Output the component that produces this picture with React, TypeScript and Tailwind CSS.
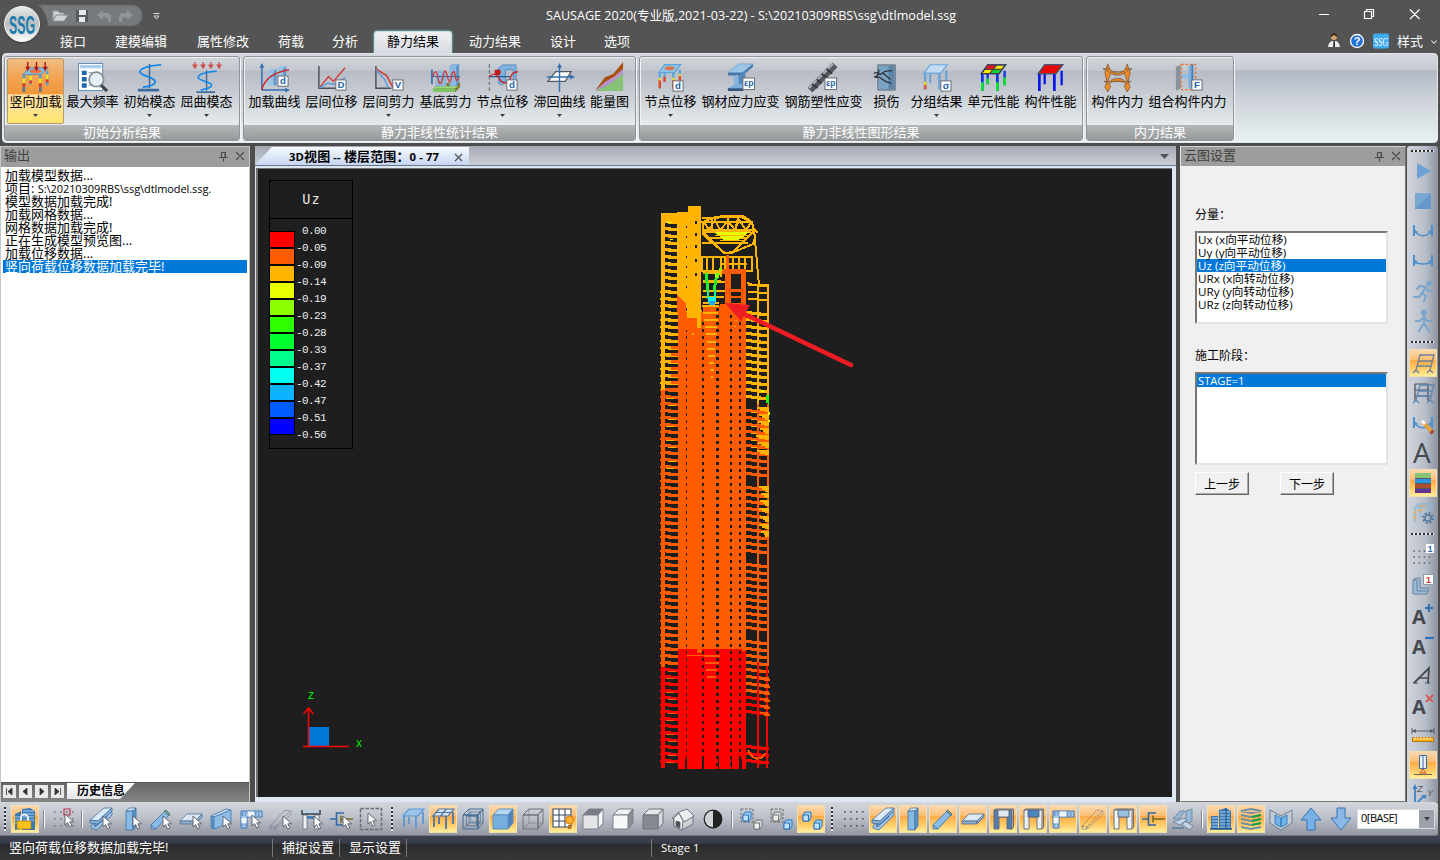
import React from 'react';

const UI = "font-['Open_Sans','Noto_Sans_CJK_SC',sans-serif]";
const CJK = "font-['Noto_Sans_CJK_SC',sans-serif]";

/* ---------- small building blocks for the icons ---------- */

const Cursor = ({ x = 12, y = 9 }: { x?: number; y?: number }) => (
  <path transform={`translate(${x} ${y})`} d="M0 0v11l2.6-2.4 2 4.4 2.2-1-2-4.2h3.8z" fill="#fff" stroke="#555b66" strokeWidth=".9" />
);

const Tag = ({ t, x = 19, y = 17 }: { t: string; x?: number; y?: number }) => (
  <g>
    <rect x={x + 0.5} y={y + 0.5} width={t.length > 1 ? 12 : 10.5} height={t.length > 1 ? 12 : 10.5} fill="#fff" stroke="#666b73" />
    <text x={x + (t.length > 1 ? 6.5 : 5.8)} y={y + 9.2} textAnchor="middle" fontSize={t.length > 1 ? 9 : 10} fontWeight="700" fill="#2563a8" fontFamily="Liberation Sans">{t}</text>
  </g>
);

const TableFrame = ({ top, leg, tipA, tipB }: { top: string; leg: string; tipA?: string; tipB?: string }) => (
  <g>
    <path d="M10 12v11M27.500 9v15" stroke={leg} strokeWidth="2.4" />
    <path d="M4.500 12v18M20 12v18" stroke={leg} strokeWidth="2.8" />
    {tipA && <path d="M4.500 18v7M20 18v7M27.500 14v5" stroke={tipA} strokeWidth="2.8" />}
    {tipB && <path d="M4.500 21v9M20 21v9M10 17v6M27.500 16v8" stroke={tipB} strokeWidth="2.8" />}
    <path d="M3.500 12 10 3h18.500l-7 9z" fill={top} stroke={leg} strokeWidth="1.3" />
  </g>
);

const Spring = ({ y = 0 }: { y?: number }) => (
  <g fill="none">
    <path d={`M16 ${2 + y}V27`} stroke="#46688f" strokeWidth="1.6" />
    <path d={`M28 ${3 + y}C13 ${4 + y} 7 ${7 + y} 6 ${10 + y} 6 ${14 + y} 20 ${15 + y} 22 20 22 23 17 25 9 26`} stroke="#0f86e8" strokeWidth="1.8" />
    <path d="M4 29h22" stroke="#3e6b9e" strokeWidth="3" />
  </g>
);

const ribbonIcons: Record<string, React.ReactNode> = {
  load: (
    <g>
      <path d="M4 13v17M21 13v17M11 11v12M28 9v15" stroke="#5aa0c8" strokeWidth="2.800" />
      <path d="M4 17v5M21 17v5M11 14v5M28 13v5" stroke="#f6e21b" strokeWidth="2.800" />
      <path d="M4 22v4M21 22v4M11 19v3M28 18v3" stroke="#e03a22" strokeWidth="2.800" />
      <path d="M4 26v5M21 26v5" stroke="#6b7683" strokeWidth="2.800" />
      <path d="M3 13 9 6h20l-7 7z" fill="#7cbfdf" stroke="#6f8aa0" />
      <ellipse cx="16" cy="9.500" rx="6" ry="2.4" fill="#e8734b" />
      <path d="M8 0v6M17 0v6M26 0v6" stroke="#a50f14" strokeWidth="1.4" />
      <path d="M5.500 5h5L8 9.500zM14.500 5h5L17 9.500zM23.500 5h5L26 9.500z" fill="#b01016" />
    </g>
  ),
  freq: (
    <g>
      <rect x="1.5" y="1.5" width="25" height="28" fill="#fff" stroke="#5d89b5" />
      <rect x="3" y="3" width="22" height="3.500" fill="#a9cdec" />
      <path d="M5 9h5v4.500H5zM5 15.500h5V20H5zM5 22h5v4.500H5z" fill="#1b66a8" />
      <path d="M12 11h4M12 24h5M24 25v2" stroke="#6b9ccb" />
      <circle cx="20" cy="18" r="7.500" fill="#e3eff4" stroke="#8c8f93" strokeWidth="1.8" />
      <path d="m25 24 6 6" stroke="#3f4246" strokeWidth="3.2" />
    </g>
  ),
  mode: <Spring />,
  buckle: (
    <g>
      <g transform="translate(2 6) scale(.88)"><Spring y={1} /></g>
      <path d="M4 0v4M12.500 0v4M20.500 0v4M29 0v4" stroke="#c9544e" strokeWidth="1.4" />
      <path d="M1 2.500h6L4 7.500zM9.500 2.500h6l-3 5zM17.500 2.500h6l-3 5zM26 2.500h6l-3 5z" fill="#d0504a" />
    </g>
  ),
  curve: (
    <g fill="none">
      <path d="m9 10 3-3h6v17H9zM19 7l3-3h6v18h-9z" fill="#9cc3e6" />
      <path d="M15 10l3-3v17h-3zM25 7l3-3v18h-3z" fill="#6096c8" />
      <path d="M3 29V4M3 29h25" stroke="#3470b3" strokeWidth="1.6" />
      <path d="m.5 6 2.500-5 2.500 5zM27 26.500v5l5-2.500z" fill="#3470b3" />
      <path d="M3 29C5 18 14 11 31 8" stroke="#c92a2a" strokeWidth="1.5" />
      <Tag t="d" x={19} y={14} />
    </g>
  ),
  driftD: (
    <g fill="none">
      <path d="M3 4v23h21" stroke="#4b4f57" strokeWidth="1.5" />
      <path d="m3 27 10-12 5 5L30 6" stroke="#cc3c33" strokeWidth="1.4" />
      <path d="m3 27 9-5 7 1 11-7" stroke="#5d9bd6" strokeWidth="1.5" />
      <Tag t="D" x={20} y={18} />
    </g>
  ),
  shearV: (
    <g fill="none">
      <path d="M3 4v23h16" stroke="#4b4f57" strokeWidth="1.5" />
      <path d="m3 7 11 7 7 13" stroke="#cc3c33" strokeWidth="1.6" />
      <path d="m3 8 9 10 4 9" stroke="#5d9bd6" strokeWidth="1.5" />
      <Tag t="V" x={20} y={18} />
    </g>
  ),
  base: (
    <g fill="none">
      <path d="m4 27 5-5 22-1v5l-5 5z" fill="#7a7a2f" />
      <path d="m3 27 4-2h23l-4 2z" fill="#9ad878" />
      <path d="M3 27h23v4H3z" fill="#7fc463" />
      <path d="m6 11 3-2h8v16H6zM20 4l3-2h7v20l-3 3h-7z" fill="#8cb8df" />
      <path d="M27 4l3-2v20l-3 3z" fill="#5d93c6" />
      <path d="M2 8v15" stroke="#2b66a8" strokeWidth="1.6" />
      <path d="M2 15h29" stroke="#2b66a8" />
      <path d="M3 15c2-7 4-6 5 0s3 12 5 2 3-10 5-2 3 7 4 1 3-9 4-2 2 6 4 2" stroke="#d23a32" strokeWidth="1.4" />
    </g>
  ),
  nodeCurve: (
    <g fill="none">
      <path d="M2.500 2v28" stroke="#777" strokeWidth="1.300" strokeDasharray="4 2" />
      <path d="m11 7 5-4h14v15l-3 3V8h-8v13l-4 3-3-2V10z" fill="#7fb2e0" stroke="#4a80b5" strokeWidth=".8" />
      <path d="M2 15h22" stroke="#2b5c90" strokeWidth="1.3" />
      <path d="M2 15c7-5 8-2 11 3s9 5 11-1 3-6 8-7" stroke="#c6252b" strokeWidth="1.4" />
      <path d="M8 8h6v5l-6 1z" fill="#c01c1c" />
      <Tag t="d" x={20} y={18} />
    </g>
  ),
  hyst: (
    <g fill="none">
      <path d="m4 20 8-10h16l-6 10z" fill="#fff" stroke="#55585e" strokeWidth="1.3" />
      <path d="M16 31V5M3 15.500h25" stroke="#3470b3" strokeWidth="1.5" />
      <path d="m13.500 6 2.500-5 2.500 5zM27 13v5l5-2.500z" fill="#3470b3" />
    </g>
  ),
  energy: (
    <g>
      <path d="M2 30 14 19l7-5 9-7v23z" fill="#85c477" />
      <path d="m2 30 11-12 8-4 9-8v6l-10 8-8 5z" fill="#b694d0" />
      <path d="m1 30 10-14 9-4L30 0v7l-9 8-9 5z" fill="#a8500e" />
    </g>
  ),
  nodeD: (
    <g>
      <g transform="scale(.9) translate(1 0)"><TableFrame top="#8fc4e6" leg="#5aa5d9" tipA="#f0df2c" tipB="#e04a2c" /></g>
      <ellipse cx="15" cy="6.500" rx="5" ry="2" fill="#dd744d" />
      <Tag t="d" x={18} y={19} />
    </g>
  ),
  steel: (
    <g>
      <path d="m3 11 11-9h15l-11 9z" fill="#9dc5ea" stroke="#5a8fc2" strokeWidth=".6" />
      <path d="M3 11h15l11-9v3l-11 9H3z" fill="#4677a8" />
      <path d="M9 14h5v12H9z" fill="#86b5df" /><path d="m14 14 7-5v13l-7 5z" fill="#5387bb" />
      <path d="m3 27 7-4h13l-5 4z" fill="#7eaedb" /><path d="M3 27h16v3H3z" fill="#30547f" />
      <Tag t="εp" x={18} y={16} />
    </g>
  ),
  rebar: (
    <g>
      <path d="M2 29 28 3" stroke="#55595f" strokeWidth="7" />
      <path d="M1 27 26 2" stroke="#b0b4b9" strokeWidth="2" />
      <path d="m4 23 6 4M9 18l5 4M14 12l6 5M19 7l6 5" stroke="#303338" strokeWidth="1.700" />
      <Tag t="εp" x={17} y={16} />
    </g>
  ),
  damage: (
    <g fill="none">
      <rect x="7" y="3" width="18" height="26" fill="#7aa3c3" stroke="#6a6f76" />
      <rect x="18" y="4" width="6" height="24" fill="#5d87aa" />
      <path d="M3 12c4-4 5 3 8 0s6-3 11-3M3 15l6 1 6 4 6 2M12 11l8 7M8 8v4l-4 4" stroke="#2e3238" strokeWidth="1.300" />
    </g>
  ),
  group: (
    <g>
      <g transform="scale(.95)"><TableFrame top="#c2dbf2" leg="#6ba5da" /></g>
      <path d="M4.300 20v4" stroke="#e3cf2a" strokeWidth="2.700" />
      <path d="M4.300 24v4" stroke="#e0502c" strokeWidth="2.700" />
      <Tag t="σ" x={20} y={19} />
    </g>
  ),
  element: (
    <g>
      <TableFrame top="#ffe800" leg="#1433e0" tipB="#10e033" />
      <path d="M10 3h9l-3.500 4.500H6.800z" fill="#e8101a" />
      <path d="M15.500 7.500H25L21.500 12H12z" fill="#12d834" />
      <path d="M3.500 12 10 3h18.500l-7 9zM7 7.500h18M19.500 3 12 12" fill="none" stroke="#444" strokeWidth="1.3" />
    </g>
  ),
  member: (
    <g>
      <TableFrame top="#e60000" leg="#0b17e6" />
      <path d="M3.500 12 10 3h18.500l-7 9z" fill="#e80808" stroke="#555" strokeWidth="1.3" />
    </g>
  ),
  force: (
    <g fill="#f08a24" stroke="#7c5b3c" strokeWidth=".8">
      <path d="m6 2 3 9-3 9 3 5-3 6-3-5 2-6-2-9zM26 2l-3 9 3 9-3 5 3 6 3-5-2-6 2-9z" />
      <path d="M1 7h7c4 6 12 6 16 0h7l-5 2c-5 6-15 6-20 0zM2 20h6c4-4 12-4 16 0h6l-5 2c-5-3-13-3-18 0z" />
      <path d="M9 10h14M9 20h14" fill="none" />
    </g>
  ),
  combo: (
    <g>
      <path d="m4 5 5-2v24l-5 3z" fill="#8a929c" />
      <path d="M9 13h9v4H9z" fill="#8fbbe6" />
      <path d="m17 4 5-2v23l-5 3z" fill="#7fb0df" /><path d="m20 3 2-1v23l-2 1z" fill="#4c80b4" />
      <path d="M9.500 2.500h15v26h-15z" fill="none" stroke="#f26a1b" strokeWidth="1.2" strokeDasharray="2.500 2" />
      <Tag t="F" x={20} y={18} />
    </g>
  ),
};

const Cube = ({ front = 'none', top = 'none', side = 'none', line = '#5f646c' }: { front?: string; top?: string; side?: string; line?: string }) => (
  <g stroke={line} strokeWidth="1" strokeLinejoin="round">
    {front === 'none' && <path d="M8 2v14h14M8 16l-6 6" fill="none" strokeWidth=".6" />}
    <path d="m2 8 6-6h14l-5 6z" fill={top} />
    <path d="m17 8 5-6v14l-5 6z" fill={side} />
    <path d="M2 8h15v14H2z" fill={front} />
  </g>
);

const IBeam = () => (
  <g stroke="#476f9b" strokeWidth=".8" strokeLinejoin="round">
    <path d="m2 19 16-16 5 2v3L8 23l-6-2z" fill="#9cc2e6" />
    <path d="m4 14 12-9 2 5L6 20z" fill="#5b8fc4" />
    <path d="M1 13 15 1h8L9 14z" fill="#dceaf8" />
    <path d="m1 13 8 1L23 1v3L9 17l-8-1z" fill="#86b4df" />
  </g>
);
const Column = () => (
  <g stroke="#3f729f" strokeWidth=".8">
    <path d="m7 4 3-3h7l-3 3z" fill="#d6e8f8" />
    <path d="M7 4h7v19H7z" fill="#86b9e4" />
    <path d="m14 4 3-3v18l-3 4z" fill="#5b94c8" />
  </g>
);
const Brace = () => (
  <g stroke="#3f6f9e" strokeWidth=".8">
    <path d="m2 18 14-14 4 4L7 22H2z" fill="#8ab9e6" />
    <path d="m15 4 2-1 4 4-1 2z" fill="#7c9c6a" />
    <path d="m2 18 5 4" />
  </g>
);
const Slab = () => (
  <g stroke="#56718e" strokeWidth=".8">
    <path d="m1 14 7-7h15l-7 7z" fill="#dbe8f5" />
    <path d="M1 14h15v3H1zM16 14l7-7v3l-7 7z" fill="#88abcf" />
  </g>
);
const Wall = () => (
  <g stroke="#4a7eb0" strokeWidth=".9" strokeLinejoin="round">
    <path d="m2 9 15-7 5 1-17 7z" fill="#c5def4" />
    <path d="m2 9 3 1v12l-3-1z" fill="#5d95ca" />
    <path d="M5 10 22 3v12L5 22z" fill="#8dbce6" />
  </g>
);
const Corner = () => (
  <g>
    <path d="M2 4h21v6H8v11H2z" fill="#a9c9e8" stroke="#3d76b0" strokeWidth="1" />
    <path d="M9 4.500h6v5H9z" fill="#f2f5f8" />
    <path d="M2.500 11h5v5h-5z" fill="#f2f5f8" />
    <path d="M3 6h5M16 6h6M16 8h6M3 18h4M3 8h4" stroke="#2d6fb2" strokeDasharray="1.500 1.500" />
  </g>
);
const Dashed = () => (
  <path d="M1 19 16 3l5 1L6 20zM6 20v2L22 7V4M1 19v3h5" fill="none" stroke="#747a83" strokeWidth=".9" strokeDasharray="2 1.200" />
);
const Portal = ({ beam = '#dbe6f0', legs = '#6f9fce', edge = '#596879' }: { beam?: string; legs?: string; edge?: string }) => (
  <g stroke={edge} strokeWidth=".9">
    <path d="M3 3h18v19h-5V10H8v12H3z" fill={legs} />
    <path d="M7 3h11v7H7z" fill={beam} />
    <path d="M21 3l1.500-1v18L21 22M3 3l2-1h17" fill="none" />
  </g>
);
const Damper = () => (
  <g fill="none" stroke="#2f69a5" strokeWidth="1.600">
    <path d="M1 12h6M15 6H7.500v12H15" />
    <path d="M12 12h12M12 8.500v7" stroke="#776b23" />
  </g>
);
const Dots = ({ tint = '#50555e' }: { tint?: string }) => (
  <g fill={tint}>
    {[3, 9, 15, 21].map((x) => [4, 11, 18].map((y) => <rect key={`${x}-${y}`} x={x} y={y} width="1.600" height="1.600" />))}
  </g>
);
const Table = ({ leg = '#5898d4', top = '#9cc3e8', grid = false }: { leg?: string; top?: string; grid?: boolean }) => (
  <g stroke={leg} strokeWidth="1.200">
    <path d="M3 9v11M15 9v13M8 10v7M22 5v12" fill="none" strokeWidth="1.800" />
    <path d="m2 9 6-7h15l-6 7z" fill={top} />
    {grid && <path d="M5 5.500h15M15.500 2 9.500 9" fill="none" />}
  </g>
);
const Bowl = ({ deep = true }: { deep?: boolean }) => (
  <g fill="none" stroke="#4f8fca" strokeWidth="1.500">
    <path d="M3 6v11M21 6v11" strokeWidth="2" />
    <path d={deep ? 'M3 10c4 9 14 9 18 0' : 'M3 12c3 4 15 4 18 0'} />
    <path d="M3 10l4 3-4 2M21 10l-4 3 4 2" fill="#4f8fca" stroke="none" />
  </g>
);
const Leaning = ({ c = '#6c8199' }: { c?: string }) => (
  <path d="m5 19 4-15h14l-4 15M7.500 10h14M6 15h14M2 22l3-3 3 3M16 22l3-3 3 3" fill="none" stroke={c} strokeWidth="1.300" />
);
const Letter = ({ small = true }: { small?: boolean }) => (
  <text x={small ? 1 : 2} y={small ? 21 : 22} fontSize={small ? 20 : 28} fontWeight={small ? 700 : 400} fontFamily="Open Sans" fill="#454950">A</text>
);
const Link = ({ a, b, both = false }: { a: string; b: string; both?: boolean }) => (
  <g strokeWidth="1" strokeLinejoin="round">
    {!both && <path d="M2 2h12v13H2z" fill="none" stroke="#666" strokeDasharray="2.500 1.500" />}
    {[[4, 5, a], [15, 13, b]].map(([x, y, c]) => (
      <g key={String(x)} transform={`translate(${x} ${y})`} stroke={c === '#d5d7da' ? '#777' : '#2a72b8'}>
        <path d="m0 3 2-3h6v6l-2 3H0z" fill={String(c)} /><path d="M0 3h5.500v6H0z" fill={c === '#d5d7da' ? '#eceded' : '#bfe0f8'} />
      </g>
    ))}
  </g>
);

const icons: Record<string, React.ReactNode> = {
  lock: (
    <g>
      <path d="m2 7 6-3v18l-6 1zM9 2l8-1 5 3v19H9z" fill="#3a7ab4" />
      <path d="M2 10h6M2 13h6M10 4h11M10 7h11M10 10h11M10 13h11M2 16h6" stroke="#a6cfec" />
      <path d="M8 14v-3a3.500 3.500 0 0 1 7 0v3" fill="none" stroke="#e8edf2" strokeWidth="2" />
      <rect x="4" y="14" width="14" height="8" rx="1" fill="#fbc11a" stroke="#b27a10" strokeWidth=".7" />
    </g>
  ),
  pickGrid: <g><Dots tint="#777c85" /><path d="M13 2h6v6h-6z" fill="none" stroke="#c0344c" strokeWidth="1.200" /><Cursor x={14} y={7} /></g>,
  pickBeam: <g><IBeam /><Cursor x={14} /></g>,
  pickCol: <g><Column /><Cursor x={14} /></g>,
  pickBrace: <g><Brace /><Cursor x={14} /></g>,
  pickSlab: <g><Slab /><Cursor x={14} /></g>,
  pickWall: <g><Wall /><Cursor x={14} /></g>,
  pickCorner: <g><Corner /><Cursor x={13} y={8} /></g>,
  pickDash: <g><Dashed /><Cursor x={14} /></g>,
  pickPortal: <g><path d="M2 3h20v5H2z" fill="#59626d" /><path d="M4 3h16v3H4z" fill="#bed0e0" /><path d="M4 8h4v14H4zM16 8h4v14h-4z" fill="#eef0f2" stroke="#666d76" strokeWidth=".8" /><path d="M8 9h8v3H8z" fill="#4c80b4" /><Cursor x={15} /></g>,
  pickDamper: <g><Damper /><Cursor x={14} /></g>,
  pickBox: <g><path d="M1.500 1.500h21v21h-21z" fill="none" stroke="#686d74" strokeWidth="1.500" strokeDasharray="3.500 1.500" /><Cursor x={9} y={6} /></g>,
  table: <Table />,
  tableGrid: <Table leg="#4c75a4" top="#dbe5ef" grid />,
  cubeWire: <g><Cube line="#426c91" /><g transform="translate(4 3.500) scale(.7)"><Cube line="#426c91" /></g></g>,
  cubeBlue: <Cube front="#76aede" top="#b7d6f1" side="#4d83b8" line="#5a8fc2" />,
  cubeLine: <Cube line="#6f747b" />,
  gridBulb: (
    <g>
      <path d="M2 2h18v18H2z" fill="#fff" />
      <path d="M2 2h18v18H2zM8 2v18M14 2v18M2 8h18M2 14h18" fill="none" stroke="#394b68" strokeWidth="1.100" />
      <circle cx="18.500" cy="13" r="4" fill="#ffae32" stroke="#d17b12" /><path d="M17 18h3v4h-3z" fill="#c06c15" />
    </g>
  ),
  cubeTop: <Cube front="#e3e5e8" top="#767b84" side="#f5f6f7" line="#7c8087" />,
  cubeSide: <Cube front="#f7f8f9" top="#f1f2f4" side="#888d96" line="#7c8087" />,
  cubeFront: <Cube front="#858a93" top="#e4e6e9" side="#d7dadf" line="#6f747b" />,
  house: (
    <g stroke="#646a72" strokeWidth=".9" strokeLinejoin="round">
      <path d="m3 11 6-5 13 3v8l-11 6-8-4z" fill="#cdd0d4" /><path d="m3 11 5-5 4 8-1 9-8-4z" fill="#f4f5f5" /><path d="m1 11 7-6 8-3 7 7-10 6-5-9-6 6z" fill="#eceded" /><path d="m5 14 4 1v6l-4-2z" fill="#44494f" />
    </g>
  ),
  contrast: <g><circle cx="12" cy="12" r="8.800" fill="#cfd2d7" stroke="#222" strokeWidth="1.200" /><path d="M12 3a9 9 0 0 1 0 18z" fill="#222" /></g>,
  linkA: <Link a="#9fcdf2" b="#d5d7da" />,
  linkB: <Link a="#d5d7da" b="#9fcdf2" />,
  linkC: <Link a="#9fcdf2" b="#9fcdf2" both />,
  dots: <Dots />,
  beam: <IBeam />,
  column: <Column />,
  brace: <Brace />,
  slab: <Slab />,
  portalBlue: <Portal legs="#557eac" beam="#e3e8ee" />,
  portalBeam: <Portal legs="#eceeef" beam="#4c85be" />,
  corner: <Corner />,
  dashed: <Dashed />,
  portalWhite: <Portal legs="#f4f4f4" beam="#9cc0e0" />,
  damper: <Damper />,
  mixed: <g opacity=".85"><path d="m2 12 7-8h5l-6 8zM15 4l6-2v12l-4 2-2-2z" fill="#8fb8dc" stroke="#5b7894" strokeWidth=".9" /><path d="m2 15 11-4 3 2-7 5zM14 14l8 5-3 4-8-5z" fill="#c6daec" stroke="#5b7894" strokeWidth=".9" /><path d="M1 20h12v2H1z" fill="#62809c" /></g>,
  tower: (
    <g>
      <path d="M2 9h7v13H2zM10 3l7-2 5 3v18H10z" fill="#3a79b4" />
      <path d="M3 11h6M3 14h6M3 17h6M3 20h6M11 5h10M11 8h10M11 11h10M11 14h10M11 17h10M11 20h10" stroke="#a9d0ec" />
      <path d="M17 1v21" stroke="#1f558a" /><path d="M1 22h22" stroke="#1f558a" strokeWidth="1.500" />
    </g>
  ),
  layers: (
    <g fill="none" strokeWidth="2">
      <path d="m2 4 10-2 10 2-10 2zM2 8l10 2 10-2M2 12l10 2 10-2M2 16l10 2 10-2M2 20l10 2 10-2" stroke="#6d8fa3" />
      <path d="m13 10 9-2M13 14l9-2M13 18l9-2" stroke="#16a342" />
    </g>
  ),
  section: <g stroke="#64788c" strokeWidth=".9"><path d="m1 3 11 6 11-6v13l-11 7-11-7z" fill="#c3cbd3" /><path d="m6 8 6 3v9l-6-3zM12 11l6-3v9l-6 3z" fill="#74b3e8" stroke="#2e7abc" /></g>,
  up: <path d="m12 1 10 12h-6v10H8V13H2z" fill="#79b0e6" stroke="#3775b5" />,
  down: <path d="m12 23 10-12h-6V1H8v10H2z" fill="#8ab9e8" stroke="#3775b5" />,
  play: <path d="m6 4 14 8-14 8z" fill="#6ba1d3" />,
  stop: <g><path d="M4 4h16v16H4z" fill="#7aa8d0" /><path d="M20 4v16H4z" fill="#6498c8" /></g>,
  bowl1: <Bowl />,
  bowl2: <Bowl deep={false} />,
  run: <g fill="none" stroke="#7aa5cd" strokeWidth="2.200" strokeLinecap="round"><circle cx="18" cy="4.500" r="1.700" fill="#7aa5cd" /><path d="m15 8-6-1-3 3M15 8l-4 6 4 3-2 5M11 14l-3 4H3M15 8l2 4h4" /></g>,
  walk: <g fill="none" stroke="#7aa5cd" strokeWidth="2.200" strokeLinecap="round"><circle cx="13" cy="3.500" r="2" fill="#7aa5cd" /><path d="M13 7v7l5 8M13 14 8 22M13 8l-4 4H5M13 8l3 4h4" /></g>,
  lean: <Leaning />,
  lean2: <g><path d="M4 3h13v17M4 3v17M4 9h13M4 15h13" fill="none" stroke="#4b5058" strokeWidth="1.200" /><Leaning c="#5c86b4" /></g>,
  bowlPen: <g><Bowl /><path d="m12 11 8 9" stroke="#e8a23c" strokeWidth="4" /><path d="m11 10 3 3" stroke="#fff" strokeWidth="3" /><path d="m20 20 2 2" stroke="#a8482e" strokeWidth="4" /></g>,
  bigA: <Letter small={false} />,
  bands: <g><path d="M4 2h16v20H4z" fill="#55595e" /><path d="M4 2h16v5H4z" fill="#85c477" /><path d="M4 8h16v4H4z" fill="#2e95e3" /><path d="M4 13h16v4H4z" fill="#ad5030" /><path d="M4 18h16v4H4z" fill="#633294" /></g>,
  gear: <g><g opacity=".65"><path d="M4 7v14M9 6v11M16 6v5M21 4v6" stroke="#8fb7d8" strokeWidth="2.600" /><path d="M4 10v8M9 8v5" stroke="#e2a23b" strokeWidth="2.600" strokeDasharray="3 2" /><path d="m2 7 5-5h15l-4 5z" fill="#82bad5" /><path d="M8 5h8" stroke="#d9a066" strokeWidth="2" /></g><circle cx="17" cy="17" r="4.500" fill="none" stroke="#587fa6" strokeWidth="3" strokeDasharray="2 1.500" /><circle cx="17" cy="17" r="3" fill="none" stroke="#587fa6" strokeWidth="1.500" /></g>,
  dotsOne: <g><g transform="translate(0 4) scale(.85)"><Dots /></g><rect x="15" y="1" width="8" height="9" fill="#fff" /><text x="19" y="8.800" textAnchor="middle" fontSize="9" fontWeight="700" fill="#2c6fad" fontFamily="Liberation Sans">1</text></g>,
  boxOne: <g strokeLinejoin="round"><path d="m2 7 3-2h4v10h9l-2 6H2z" fill="#9cbbd6" stroke="#688299" /><path d="M2 7h4v11h11" fill="none" stroke="#688299" /><rect x="12.500" y="1.500" width="10" height="10" fill="#fff" stroke="#8298ad" /><text x="17.500" y="10" textAnchor="middle" fontSize="9" fontWeight="700" fill="#d1402a" fontFamily="Liberation Sans">1</text></g>,
  aPlus: <g><Letter /><path d="M14 5h8M18 1v8" stroke="#2e75bb" strokeWidth="2.200" /></g>,
  aMinus: <g><Letter /><path d="M14 5h9" stroke="#2e75bb" strokeWidth="2.200" /></g>,
  aItalic: <g fill="none" stroke="#454950" strokeWidth="1.800"><path d="M3 20 18 5l-1 15" /><path d="M8 15h10" strokeWidth="1.500" /><path d="M2 20h5M14 20h5" strokeWidth="1.200" /></g>,
  aX: <g><Letter /><path d="m15 2 7 7M22 2l-7 7" stroke="#e34440" strokeWidth="1.500" /></g>,
  ruler: <g><path d="M1 8h22M1 5v6M23 5v6" stroke="#595e66" /><path d="m1 8 4-2v4zM23 8l-4-2v4z" fill="#595e66" /><path d="M1.500 14.500h21v4h-21z" fill="#fbb823" stroke="#bd7410" /><path d="M4 14v3M7 14v2M10 14v3M13 14v2M16 14v3M19 14v2" stroke="#fff1bd" /></g>,
  support: <g><path d="M8.500 2.500h7v13h-7z" fill="#e6f1fa" stroke="#3b6e9c" /><path d="M12 2v14" stroke="#3b6e9c" /><path d="m9 20 3-4 3 4z" fill="none" stroke="#c44b2f" /><path d="M3 21.500h18" stroke="#7a6236" /></g>,
  axes: <g><path d="M4 22V4M4 22l9-9" stroke="#3f83c4" strokeWidth="1.800" /><path d="m1.500 6 2.500-5 2.500 5zM10 12h5v4z" fill="#3f83c4" /><text x="6" y="9" fontSize="9" fontStyle="italic" fill="#50565f" fontFamily="Liberation Sans">Z</text><text x="16" y="13" fontSize="9" fontStyle="italic" fill="#50565f" fontFamily="Liberation Sans">Y</text></g>,
};

/* ---------- toolbar parts ---------- */

const ACTIVE = 'border border-[#f3deae] bg-[linear-gradient(#fbd8b0,#fdbf76_36%,#ffab47_40%,#ffd06c_75%,#ffee9d)]';

const ToolButton = ({ name }: { name: string }) => {
  const on = name[0] === '*';
  return (
    <div className="flex h-[30px] w-[30px] shrink-0 items-center justify-center">
      <div className={`flex h-7 w-7 items-center justify-center ${on ? ACTIVE : ''}`}>
        <svg width="24" height="24" viewBox="0 0 24 24" className="shrink-0 overflow-visible">{icons[on ? name.slice(1) : name]}</svg>
      </div>
    </div>
  );
};

const HGrip = ({ w = 'w-3' }: { w?: string }) => (
  <div className={`flex h-full shrink-0 items-center justify-center ${w}`}><div className="h-[24px] w-[2px] bg-[repeating-linear-gradient(#2b2d31_0_2px,#e8eaee_2px_4px)]" /></div>
);
const VGrip = ({ h = 'h-3' }: { h?: string }) => (
  <div className={`flex w-full shrink-0 items-center justify-center ${h}`}><div className="h-[2px] w-[23px] bg-[repeating-linear-gradient(90deg,#2b2d31_0_2px,#e8eaee_2px_4px)]" /></div>
);
const Sep = () => <div className="flex w-2 shrink-0 justify-center"><div className="h-[18px] w-[2px] border-r border-white bg-[#7d828b]" /></div>;

const bottomTools: string[] = [
  'g10', '*lock', '|', 'pickGrid', '|', 'pickBeam', 'pickCol', 'pickBrace', 'pickSlab', 'pickWall', 'pickCorner', 'pickDash', 'pickPortal', 'pickDamper', 'pickBox', 'g',
  'table', '*tableGrid', 'cubeWire', '*cubeBlue', 'cubeLine', '*gridBulb', 'cubeTop', 'cubeSide', 'cubeFront', 'house', 'contrast', '|', 'linkA', 'linkB', '*linkC', 'g',
  'dots', '*beam', '*column', '*brace', '*slab', '*portalBlue', '*portalBeam', '*corner', '*dashed', '*portalWhite', '*damper', 'mixed', '|', '*tower', '*layers', 'section', 'up', 'down',
];
const sideTools: string[] = [
  'play', 'stop', 'bowl1', 'bowl2', 'run', 'walk', 'g', '*lean', 'lean2', 'bowlPen', 'bigA', '*bands', 'gear', 'g',
  'dotsOne', 'boxOne', 'aPlus', 'aMinus', 'aItalic', 'aX', 'ruler', '*support', 'axes',
];

/* ---------- ribbon ---------- */

type Btn = { t: string; i: string; w: string; menu?: boolean; on?: boolean };
const S = 'w-[43px]', M = 'w-[57px]', L = 'w-[83px]';
const groups: { title: string; w: string; items: Btn[] }[] = [
  { title: '初始分析结果', w: 'w-[236px]', items: [
    { t: '竖向加载', i: 'load', w: M, menu: true, on: true }, { t: '最大频率', i: 'freq', w: M }, { t: '初始模态', i: 'mode', w: M, menu: true }, { t: '屈曲模态', i: 'buckle', w: M, menu: true } ] },
  { title: '静力非线性统计结果', w: 'w-[393px]', items: [
    { t: '加载曲线', i: 'curve', w: M }, { t: '层间位移', i: 'driftD', w: M }, { t: '层间剪力', i: 'shearV', w: M, menu: true }, { t: '基底剪力', i: 'base', w: M }, { t: '节点位移', i: 'nodeCurve', w: M, menu: true }, { t: '滞回曲线', i: 'hyst', w: M, menu: true }, { t: '能量图', i: 'energy', w: S } ] },
  { title: '静力非线性图形结果', w: 'w-[444px]', items: [
    { t: '节点位移', i: 'nodeD', w: M, menu: true }, { t: '钢材应力应变', i: 'steel', w: L }, { t: '钢筋塑性应变', i: 'rebar', w: L }, { t: '损伤', i: 'damage', w: S }, { t: '分组结果', i: 'group', w: M, menu: true }, { t: '单元性能', i: 'element', w: M }, { t: '构件性能', i: 'member', w: M } ] },
  { title: '内力结果', w: 'w-[148px]', items: [ { t: '构件内力', i: 'force', w: M }, { t: '组合构件内力', i: 'combo', w: L } ] },
];

const Ribbon = () => (
  <div className="mx-[2px] flex h-[90px] gap-[3px] rounded-[4px] border border-[#e4e7ea] bg-[linear-gradient(#d6d9df,#c6cad2_18%,#b4bac6_19%,#cfd5db_55%,#e9f2f3)] pl-px pt-[2px]">
    {groups.map((g) => (
      <div key={g.title} className={`flex h-[85px] shrink-0 flex-col overflow-hidden rounded-[3px] border border-[#8f949b] bg-[linear-gradient(#d2d6db,#c2c7cf_16%,#b6bbc5_17%,#d0d5da_55%,#e6ecee_82%)] shadow-[1px_1px_0_#f3f5f6,inset_1px_1px_0_#eef0f2] ${g.w}`}>
        <div className="flex h-[68px] pl-[2px] pt-px">
          {g.items.map((b) => (
            <div key={b.t + b.i} className={`flex h-[66px] shrink-0 flex-col items-center ${b.w} ${b.on ? 'rounded-[2px] border border-[#b69b6c] bg-[linear-gradient(#efbd84,#f3a354_28%,#f0983b_54%,#ffe0a0_56%,#ffe29a_72%,#ffe46a)]' : 'border border-transparent'}`}>
              <svg width="31" height="31" viewBox="0 0 32 32" className="mt-[3px] shrink-0">{ribbonIcons[b.i]}</svg>
              <div className={`-mt-px whitespace-nowrap text-[13px] leading-[18px] text-black ${CJK}`}>{b.t}</div>
              {b.menu && <svg width="5" height="3" className="mt-[4px] shrink-0"><path d="M0 0h5L2.500 3z" fill="#3c3f44" /></svg>}
            </div>
          ))}
        </div>
        <div className={`flex-1 bg-[linear-gradient(#b3b7b8,#979a9a)] text-center text-[13px] leading-[13px] text-white ${CJK}`}>{g.title}</div>
      </div>
    ))}
  </div>
);

/* ---------- header ---------- */

const menuTabs: { t: string; w: string; on?: boolean }[] = [
  { t: '接口', w: 'w-[54px]' }, { t: '建模编辑', w: 'w-[82px]' }, { t: '属性修改', w: 'w-[82px]' }, { t: '荷载', w: 'w-[54px]' }, { t: '分析', w: 'w-[54px]' },
  { t: '静力结果', w: 'w-[82px]', on: true }, { t: '动力结果', w: 'w-[82px]' }, { t: '设计', w: 'w-[54px]' }, { t: '选项', w: 'w-[54px]' },
];

const Header = () => (
  <div className="relative h-[53px] shrink-0 bg-[#545454]">
    <div className="flex h-[31px]">
      <svg width="170" height="31" viewBox="0 0 170 31">
        <path d="M38 5h94a10 10 0 0 1 0 21H48C47 17 44 9 38 5z" fill="#777a7c" stroke="#626466" />
        <path d="M53 11h5l2 2h4v2h4l-4 6H53z" fill="#cfd2d3" stroke="#9a9c9e" strokeWidth=".8" /><path d="m53 21 3-6h11" fill="none" stroke="#83878a" />
        <path d="M76 10h12v12H76z" fill="#565b60" /><path d="M79 10h7v5h-7zM79 17h6v5h-6z" fill="#e6e8e9" />
        <path d="m97 15 6-5v3h5q3 1 3 5v4h-3v-4l-5-1v3z" fill="#929597" />
        <path d="m133 15-6-5v3h-5q-3 1-3 5v4h3v-4l5-1v3z" fill="#929597" />
        <path d="M153.500 13.500h6M154 16h5l-2.500 3z" fill="none" stroke="#d7d7d7" />
      </svg>
      <div className={`w-[1110px] pt-[7px] text-center text-[12.6px] leading-[18px] text-white ${UI}`}><span className="relative left-[26px] whitespace-nowrap">SAUSAGE 2020(专业版,2021-03-22) - S:\20210309RBS\ssg\dtlmodel.ssg</span></div>
      <svg width="160" height="31" viewBox="1280 0 160 31" fill="none" stroke="#fff" strokeWidth="1.200">
        <path d="M1319 14.500h10M1364.500 11.500h7v7h-7zM1366.500 11.500v-2h7v7h-2M1410 9.500l9.500 9.500M1419.500 9.500 1410 19" />
      </svg>
    </div>
    <div className="flex h-[22px]">
      <div className="ml-[46px] flex">
        {menuTabs.map((m) => (
          <div key={m.t} className={`text-center text-[13px] ${CJK} ${m.w} ${m.on ? 'px-[2px] text-black' : 'text-white'}`}>
            <div className={m.on ? 'h-[22px] rounded-t-[3px] border border-b-0 border-[#b9e4e7] bg-[linear-gradient(#f1f1f4,#d7dae1)] leading-[18px] shadow-[0_0_2px_#b8f5f4]' : 'leading-[20px]'}>{m.t}</div>
          </div>
        ))}
      </div>
      <div className={`ml-auto flex w-[112px] text-[13px] text-white ${CJK}`}>
        <svg width="65" height="20" viewBox="0 0 65 20" className="shrink-0">
          <circle cx="6" cy="6" r="3" fill="#d8a36c" /><path d="M3 6c-1-5 7-5 6 0l-3-2z" fill="#3a281b" /><path d="M0 16c1-6 4-6 6-6s5 0 6 6z" fill="#eee" /><path d="M5.500 10h1.500v6H5z" fill="#333" />
          <circle cx="29" cy="10" r="6.500" fill="#1f6fd6" stroke="#fff" strokeWidth="1.300" /><text x="29" y="14" fontSize="11" fontWeight="700" textAnchor="middle" fill="#fff" fontFamily="Liberation Sans">?</text>
          <rect x="45" y="2.500" width="16" height="15" rx="2" fill="#3facf0" /><text x="46" y="15" textLength="14" lengthAdjust="spacingAndGlyphs" fontSize="12" fill="#fff" fontFamily="Liberation Serif">SSG</text>
        </svg>
        <span className="ml-[4px] shrink-0 leading-[19px]">样式</span>
        <svg width="6" height="5" className="ml-[8px] mt-[9px] shrink-0"><path d="m.5.500 2.500 3 2.500-3" fill="none" stroke="#fff" /></svg>
      </div>
    </div>
    <svg width="46" height="46" viewBox="0 0 46 46" className="absolute left-0 top-[2px]">
      <defs><linearGradient id="orb" x1="0" y1="0" x2="0" y2="1"><stop offset="0" stopColor="#e8eaeb" /><stop offset=".5" stopColor="#b9bdbf" /><stop offset="1" stopColor="#fff" /></linearGradient></defs>
      <circle cx="22" cy="23" r="18.500" fill="#333" opacity=".5" />
      <circle cx="22" cy="22" r="17.500" fill="url(#orb)" stroke="#f2f2f2" />
      <text x="9" y="31.500" textLength="26" lengthAdjust="spacingAndGlyphs" fontSize="25" fontWeight="700" fill="#1c7cab" fontFamily="Liberation Sans">SSG</text>
    </svg>
  </div>
);

/* ---------- docked panels ---------- */

const PanelTitle = ({ t, h }: { t: string; h: string }) => (
  <div className={`flex shrink-0 bg-[#9c9d9c] pl-[3px] text-[13px] text-[#404040] ${CJK} ${h}`}>
    <span className="leading-[16px]">{t}</span>
    <svg width="30" height="14" viewBox="0 0 30 14" className="ml-auto mr-[2px] mt-[2px]" fill="none" stroke="#4a4a4a" strokeWidth="1.100">
      <path d="M4 3.500h5M4.500 3.500v5M8.500 3.500v5M2 8.500h9M6.500 9v3.500M8 4v4M19 3l8 8M27 3l-8 8" />
    </svg>
  </div>
);

const logs = ['加载模型数据...', '项目: S:\\20210309RBS\\ssg\\dtlmodel.ssg.', '模型数据加载完成!', '加载网格数据...', '网格数据加载完成!', '正在生成模型预览图...', '加载位移数据...', '竖向荷载位移数据加载完毕!'];

const OutputPanel = () => (
  <div className="flex w-[250px] shrink-0 flex-col border-x border-t border-[#c5c7c8] bg-[#777]">
    <PanelTitle t="输出" h="h-[20px]" />
    <div className={`h-[615px] shrink-0 bg-white px-[2px] pt-[2px] text-[13px] text-black ${UI}`}>
      {logs.map((l, i) => (
        <div key={l} className={`h-[13px] whitespace-nowrap pl-[2px] leading-[12px] ${i === 7 ? 'bg-[#0078d7] text-white' : ''}`}>
          {i === 1 ? <>项目: <span className="text-[11px] tracking-[-0.08px]">{l.slice(4)}</span></> : l}
        </div>
      ))}
    </div>
    <div className="flex h-[20px] items-start gap-[3px] border-t border-[#555] bg-[linear-gradient(#666,#858585)] pl-[2px]">
      {['M3.500 3v7M9 3v7L5 6.500z', 'M8 3v7L4 6.500z', 'M5 3v7l4-3.500z', 'M4 3v7l4-3.500zM9.500 3v7'].map((d) => (
        <svg key={d} width="13" height="13" className="mt-[2px] bg-[#e9e9e9]"><path d={d} fill="#333" stroke="#333" strokeWidth=".8" /></svg>
      ))}
      <div className={`flex h-[16px] w-[68px] bg-[linear-gradient(#ffffff,#e2e5ea)] pl-[10px] text-[12px] font-bold leading-[14px] text-black [clip-path:polygon(0_0,100%_0,78%_100%,0_100%)] ${CJK}`}>历史信息</div>
    </div>
  </div>
);

const PlainButton = ({ t }: { t: string }) => (
  <button className={`h-[23px] w-[54px] border border-b-[#666] border-l-white border-r-[#666] border-t-white bg-[#f0f0f0] text-[12px] leading-[19px] text-black shadow-[inset_-1px_-1px_0_#a8a8a8] ${CJK}`}>{t}</button>
);

const components = ['Ux (x向平动位移)', 'Uy (y向平动位移)', 'Uz (z向平动位移)', 'URx (x向转动位移)', 'URy (y向转动位移)', 'URz (z向转动位移)'];
const BOX = 'w-[193px] border-2 border-b-[#e3e3e3] border-l-[#777] border-r-[#e3e3e3] border-t-[#777] bg-white';

const SettingsPanel = () => (
  <div className="ml-[4px] flex w-[226px] shrink-0 flex-col border border-t-[#d4d4d4] border-l-[#e8e8e8] border-r-[#777] border-b-[#777] bg-[#f0f0f0]">
    <PanelTitle t="云图设置" h="h-[19px]" />
    <div className={`pl-[14px] pt-[39px] text-[12px] text-black ${UI}`}>
      <div className="leading-[19px]">分量：</div>
      <div className={`mt-[7px] h-[93px] ${BOX}`}>
        {components.map((c, i) => (
          <div key={c} className={`h-[13px] whitespace-nowrap pl-px text-[11.650px] leading-[14px] ${i === 2 ? 'bg-[#0078d7] text-white' : ''}`}>{c}</div>
        ))}
      </div>
      <div className="mt-[22px] leading-[19px]">施工阶段：</div>
      <div className={`mt-[7px] h-[93px] ${BOX}`}><div className="h-[13px] bg-[#0078d7] pl-px text-[11.200px] leading-[14px] text-white">STAGE=1</div></div>
      <div className="mt-[7px] flex gap-[31px]"><PlainButton t="上一步" /><PlainButton t="下一步" /></div>
    </div>
  </div>
);

/* ---------- 3D view ---------- */

const Y = '#ffb400', O = '#ff5c00', R = '#ff0000', BG = '#1e1e1e';
type Rect = [number, number, number, number, string];

const towerRects = (): Rect[] => {
  const r: Rect[] = [];
  const add = (x: number, y: number, w: number, h: number, c: string) => r.push([x, y, w, h, c]);
  add(661, 213, 4, 177, Y); add(661, 390, 4, 277, O); add(661, 667, 4, 101, R);
  add(661, 213, 17, 8, Y); add(677, 212, 12, 100, Y); add(688, 206, 13, 110, Y);
  add(697, 310, 5, 19, Y);
  add(678, 312, 68, 337, O); add(703, 306, 17, 6, O); add(720, 304, 26, 8, O);
  add(678, 649, 68, 110, R);
  add(678, 759, 7, 10, R); add(687, 759, 15, 10, R); add(704, 759, 14, 10, R); add(719, 759, 12, 10, R); add(732, 759, 7, 10, R); add(742, 759, 4, 10, R);
  for (let k = 0; k < 79; k++) {
    const y = Math.round(213 + k * 7);
    const c = y < 382 ? Y : y < 667 ? O : R;
    if (y < 762) {
      if (y > 284) add(660, y + 1, 1, 2, c);
      add(665, y, 6, 3, c); add(668, y + 1, 10, 3, c);
      if (k % 3 !== 1 && y > 330) add(666 + (k % 2) * 2, y + 3, 8, 1, y < 470 ? Y : O);
      if (y > 345 && y < 390) add(671, y, 7, 3, O);
    }
    const gap = (y > 395 && y < 405) || (y > 472 && y < 484) || (y > 549 && y < 561) || (y > 629 && y < 640) || (y > 716 && y < 744);
    if (y > 306 && y < 762 && !gap) {
      const cr = y < 404 ? Y : y < 694 ? O : R;
      add(746, y, 6, 3, cr); add(751, y + 1, 10, 3, cr); add(759, y + 2, 10, 3, cr);
      if (y > 404 && y < 450) add(751, y + 3, 8, 1, Y);
    }
    if (y > 300) {
      const core: [number, number][] = [[686, 1], [702, 2], [716, 3], [730, 2], [739, 2]];
      core.forEach(([x, w]) => { if (!(x === 702 && y < 312)) add(x, y + 4, w, 3, BG); });
    }
  }
  [221, 233, 245, 259, 273].forEach((y) => add(695, y, 2, 3, BG));
  for (let y = 226; y < 290; y += 10) add(686, y, 1, 2, BG);
  add(757, 285, 2, 119, Y); add(767, 285, 2, 112, Y); add(757, 404, 2, 258, O); add(767, 404, 2, 262, O); add(757, 662, 2, 106, R); add(766, 666, 2, 102, R);
  [285, 292, 299].forEach((y) => { add(748, y - 1, 11, 2, Y); add(757, y, 12, 2, Y); });
  [[407, 12], [414, 10], [421, 11], [428, 9], [435, 13], [442, 11], [450, 12], [486, 10], [493, 8], [500, 9], [508, 10], [516, 9], [524, 10], [531, 8]].forEach(([y, w], i) => {
    add(769 - w, y, w, 2, Y); add(769 - w + 3, y + 2, w - 3, 2, Y); add(765, y + 4, 4, i % 2 ? 2 : 1, Y);
  });
  [677, 684, 691, 698, 705, 712].forEach((y) => { add(760, y, 8, 2, O); add(764, y + 2, 6, 2, O); });
  [655, 662, 669, 676].forEach((y, i) => add(704 + i, y, 16 - i * 2.500, 2, O));
  add(687, 655, 30, 1, O); add(697, 649, 5, 4, O);
  add(703, 272, 22, 2, Y); add(703, 280, 18, 2, Y);
  for (let i = 0; i < 11; i++) add(702 + i * 0.9, 305 + i * 7.100, 17 - i * 1.500, 2, Y);
  add(688, 319, 14, 2, Y); add(689, 326, 13, 2, Y); add(692, 333, 2, 2, Y);
  add(735, 320, 2, 1, Y); add(734, 326, 2, 1, Y);
  add(766, 395, 3, 8, '#2bf000'); add(768, 401, 1, 4, '#2bf000'); add(761, 390, 3, 2, '#e8ff00');
  add(768, 412, 2, 3, '#e8ff00'); add(768, 420, 2, 2, '#e8ff00'); add(666, 222, 6, 1, '#e8ff00'); add(670, 239, 3, 1, '#e8ff00');
  add(742, 649, 4, 2, O);
  return r;
};

const Tower = () => (
  <g shapeRendering="crispEdges" fill="none">
    {towerRects().map(([x, y, w, h, c], i) => <rect key={i} x={x} y={y} width={w} height={h} fill={c} />)}
    <path d="M677 295l9 9v10h10v2h6v14h-24z" fill={O} />
    <path d="M687 280h14v48h-4v-10h-10z" fill={Y} />
    <path d="M703 222 715 217h26l11 5 3 15-2 7-19 8-9 1-14-11-8-8zM702 218h16l3-2h22l8 5M701 222h50M703 232h48" stroke={Y} strokeWidth="2" />
    <path d="M703 230h52l3 3M704 222l5 8 6-10 5 10 8-9 7 9 4-10 7 10 6-9M702 243h46M703 232l21 21h8l21-21M712 217v14M728 218v14M738 218l-3 13M707 238h40" stroke={Y} strokeWidth="2" />
    <path d="M714 232h36l-5 3h-27zM719 236h26l-9 5h-11z" fill="#e8ff00" />
    <path d="M715 235h34M720 240h24" stroke={Y} strokeWidth="1" />
    <path d="M754 228l5 58M747 283l6 2h16" stroke={Y} strokeWidth="2" />
    <path d="M702 257h50v14h-50zM707 257v14M713 257v14M721 257v20M725 257v14M733 257v14M739 257v14M745 257v14M722 264h25M703 271h18" stroke={Y} strokeWidth="2" />
    <path d="M727 255v70" stroke={O} strokeWidth="3" />
    <path d="M725 269h6v36h-6zM741 269h5v60h-5zM722 269h24v5h-24zM731 289h11v3h-11zM731 296h11v2h-11zM725 303h21v8h-21z" fill={O} />
    <path d="M703 282h22M703 291h22M702 297h22M703 303h16" stroke={Y} strokeWidth="2" />
    <path d="M706 273l2 18M717 273l-3 18" stroke="#1fef2c" strokeWidth="3" />
    <path d="M715 273h5l-1 5h-4zM719 268h3v3h-3z" fill="#84ff00" />
    <path d="M708 290v9M715 290v9" stroke="#00ff9c" strokeWidth="2" />
    <path d="M708 297h8v5h-8z" fill="#00fff0" />
    <path d="M709 301h6v4h-6z" fill="#12aaff" />
    <path d="M748 750c5 11 13 11 17 3" stroke={O} strokeWidth="2" />
  </g>
);

const legend: [string, string][] = [
  ['0.00', 'bg-[#ff0000]'], ['-0.05', 'bg-[#ff5c00]'], ['-0.09', 'bg-[#ffb400]'], ['-0.14', 'bg-[#e8ff00]'], ['-0.19', 'bg-[#8cff00]'], ['-0.23', 'bg-[#2eff00]'], ['-0.28', 'bg-[#00ff2e]'],
  ['-0.33', 'bg-[#00ff8c]'], ['-0.37', 'bg-[#00fff0]'], ['-0.42', 'bg-[#0cb4ff]'], ['-0.47', 'bg-[#005cff]'], ['-0.51', 'bg-[#0000ff]'], ['-0.56', ''],
];
const MONO = "font-['Liberation_Mono',monospace]";

const Viewport = () => (
  <div className="relative h-[628px] bg-[#1e1e1e]">
    <svg width="914" height="628" viewBox="258 169 914 628" className="block">
      <Tower />
      <path d="m851 365-107-51" stroke="#ee1d24" strokeWidth="4.500" strokeLinecap="round" />
      <path d="m725 303 25 2-9 16z" fill="#ee1d24" />
      <rect x="309" y="727" width="20" height="19" fill="#0078d7" />
      <path d="M308.500 747v-38M303 746.500h46M303.500 714l5-6 5 6" fill="none" stroke="#ff0000" strokeWidth="1.500" />
      <text x="308" y="699" fontSize="10" fill="#00ff00" fontFamily="Liberation Mono">Z</text>
      <text x="356" y="747" fontSize="10" fill="#00ff00" fontFamily="Liberation Mono">X</text>
    </svg>
    <div className="absolute left-[11px] top-[11px] h-[269px] w-[84px] border border-black">
      <div className="h-[38px] border-b border-black pl-px text-center font-['DejaVu_Sans_Mono',monospace] text-[13.500px] leading-[37px] tracking-[1px] text-[#e6e6e6]">Uz</div>
      <div className="flex pt-[4px]">
        <div className="mt-[8px] flex w-[25px] flex-col">
          {legend.slice(0, 12).map(([, c]) => <div key={c} className={`h-[17px] border-y border-r border-black ${c}`} />)}
        </div>
        <div className="w-[33px]">
          {legend.map(([v]) => <div key={v} className={`h-[17px] pr-[2px] text-right text-[11px] leading-[17px] tracking-[-0.6px] text-[#ececec] ${MONO}`}>{v}</div>)}
        </div>
      </div>
    </div>
  </div>
);

const CenterPane = () => (
  <div className="ml-[5px] flex w-[921px] shrink-0 flex-col bg-[#dde6f3]">
    <div className="flex h-[20px] items-end border-b border-[#6d7686] bg-[linear-gradient(#a3a8b1,#cbd0d8)]">
      <div className="flex h-[18px] w-[214px] items-center bg-[linear-gradient(#f6faff,#c6d6f2)] pl-[34px] text-[11.300px] text-black [clip-path:polygon(0_100%,17px_0,100%_0,100%_100%)]">
        <span className={`whitespace-nowrap font-bold leading-[16px] tracking-[0.12px] ${UI}`}>3D<span className="text-[13px]">视图</span> -- <span className="text-[13px]">楼层范围：</span>0 - 77</span>
        <svg width="9" height="9" className="ml-auto mr-[6px] mt-[3px] shrink-0"><path d="m1 1 7 7M8 1 1 8" stroke="#555" strokeWidth="1.300" /></svg>
      </div>
      <svg width="9" height="5" className="mb-[6px] ml-auto mr-[7px]"><path d="M0 0h9L4.500 5z" fill="#4f545d" /></svg>
    </div>
    <div className="ml-px mt-[2px] mr-[4px] border-l-2 border-t border-[#707070]"><Viewport /></div>
  </div>
);

/* ---------- page ---------- */

export default function App() {
  return (
    <div className="flex h-[860px] w-[1440px] flex-col overflow-hidden bg-[#4d4d4d]">
      <Header />
      <Ribbon />
      <div className="mt-[3px] flex h-[656px] shrink-0">
        <OutputPanel />
        <CenterPane />
        <SettingsPanel />
        <div className="ml-px flex w-[31px] flex-col items-center overflow-hidden rounded-t-[3px] bg-[linear-gradient(90deg,#d0d4dd,#b8bec8_60%,#8c929f)]">
          <VGrip h="h-[10px]" />
          {sideTools.map((n, i) => (n === 'g' ? <VGrip key={i} /> : <ToolButton key={i} name={n} />))}
        </div>
      </div>
      <div className="flex h-[34px] w-[1438px] shrink-0 items-center rounded-r-[3px] border-b border-[#70757e] bg-[linear-gradient(#d3d6dc,#bdc2cb_45%,#9297a2)]">
        {bottomTools.map((n, i) => n === '|' ? <Sep key={i} /> : n === 'g' ? <HGrip key={i} /> : n === 'g10' ? <HGrip key={i} w="w-[10px]" /> : <ToolButton key={i} name={n} />)}
        <div className={`ml-px flex h-[20px] w-[78px] items-center border border-[#d8dbe0] bg-white pl-[3px] text-[11px] tracking-[-0.5px] text-black ${UI}`}>
          0[BASE]
          <div className="ml-auto flex h-full w-[15px] items-center justify-center bg-[#9ca1aa]"><svg width="6" height="4"><path d="M0 0h6L3 4z" fill="#3f4349" /></svg></div>
        </div>
      </div>
      <div className={`flex h-[24px] shrink-0 items-center bg-[linear-gradient(#3d4252,#373b48_30%,#2a2a2a_36%,#383838)] text-[13px] leading-[16px] text-white ${UI}`}>
        <div className="h-[18px] w-[272px] pl-[9px]">竖向荷载位移数据加载完毕!</div>
        <div className="h-[18px] w-[67px] border-l border-[#777] pl-[9px]">捕捉设置</div>
        <div className="h-[18px] w-[67px] border-l border-[#777] pl-[9px]">显示设置</div>
        <div className="h-[18px] w-[245px] border-l border-[#777]" />
        <div className="h-[18px] border-l border-[#777] pl-[9px] text-[11.300px] leading-[17px]">Stage 1</div>
      </div>
    </div>
  );
}
